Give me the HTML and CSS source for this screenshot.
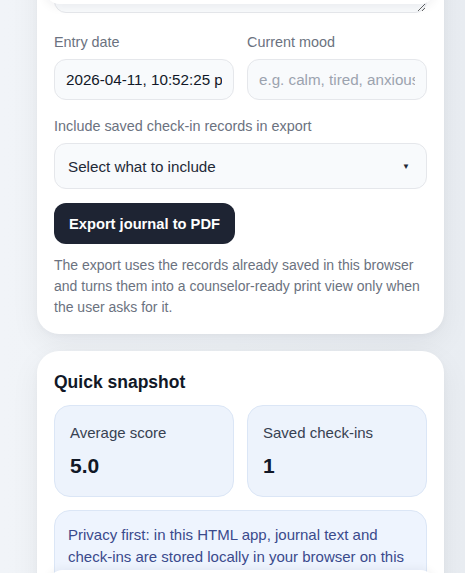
FILE: index.html
```html
<!DOCTYPE html>
<html lang="en">
<head>
<meta charset="utf-8">
<title>Journal</title>
<link rel="stylesheet" href="styles.css">
</head>
<body>
<div class="page">
  <section class="card card-form">
    <textarea class="notes" aria-label="Journal entry"></textarea>
    <div class="row">
      <label class="field">
        <span class="label">Entry date</span>
        <input class="input" type="text" value="2026-04-11, 10:52:25 pm">
      </label>
      <label class="field">
        <span class="label">Current mood</span>
        <input class="input" type="text" placeholder="e.g. calm, tired, anxious">
      </label>
    </div>
    <label class="field">
      <span class="label">Include saved check-in records in export</span>
      <div class="select">
        <span>Select what to include</span>
        <span class="caret">▼</span>
      </div>
    </label>
    <div><button class="btn" type="button">Export journal to PDF</button></div>
    <p class="note">The export uses the records already saved in this browser and turns them into a counselor-ready print view only when the user asks for it.</p>
  </section>

  <section class="card card-snap">
    <h2 class="title">Quick snapshot</h2>
    <div class="stats">
      <div class="stat">
        <div class="stat-label">Average score</div>
        <div class="stat-value">5.0</div>
      </div>
      <div class="stat">
        <div class="stat-label">Saved check-ins</div>
        <div class="stat-value">1</div>
      </div>
    </div>
    <div class="privacy">Privacy first: in this HTML app, journal text and check-ins are stored locally in your browser on this device and never leave it unless you export them.</div>
  </section>
</div>
<div class="overlay overlay-top"></div>
<div class="overlay overlay-bottom"></div>
</body>
</html>
```

FILE: styles.css
```css
* { box-sizing: border-box; }
html, body { margin: 0; height: 100%; overflow: hidden; }
body {
  background: linear-gradient(90deg, #f1f4f8 0%, #eef2f6 50%, #e9edf2 100%);
  font-family: "Liberation Sans", Arial, sans-serif;
  color: #1f2937;
}
.page {
  width: 407px;
  margin: -62px 0 0 37px;
  display: flex;
  flex-direction: column;
  gap: 17px;
}
.card {
  background: #fff;
  border-radius: 22px;
  padding: 0 17px 16px;
  box-shadow: 0 10px 30px rgba(15, 23, 42, 0.06), 0 2px 6px rgba(15, 23, 42, 0.03);
  display: flex;
  flex-direction: column;
}
.card-form { padding-top: 17px; }
.notes {
  display: block;
  width: 100%;
  height: 58px;
  resize: vertical;
  border: 1px solid #e5e7eb;
  border-radius: 12px;
  background: #f8fafc;
  margin: 0 0 19px;
  font: inherit;
}
.row {
  display: grid;
  grid-template-columns: 1fr 1fr;
  gap: 13px;
}
.field { display: flex; flex-direction: column; }
.label {
  font-size: 14.4px;
  line-height: 20px;
  color: #6b7280;
  margin-bottom: 7px;
}
.input {
  height: 41px;
  width: 100%;
  border: 1px solid #e5e7eb;
  border-radius: 12px;
  background: #f8fafc;
  padding: 0 11px;
  font: 15.2px "Liberation Sans", Arial, sans-serif;
  color: #111827;
  outline: none;
}
.input::placeholder { color: #9ca3af; }
.row + .field { margin-top: 16px; }
.select {
  height: 46px;
  border: 1px solid #e5e7eb;
  border-radius: 12px;
  background: #f8fafc;
  padding: 0 16px 0 13px;
  display: flex;
  align-items: center;
  justify-content: space-between;
  font-size: 15.2px;
  color: #1f2937;
}
.caret { font-size: 8px; color: #1f2937; }
.btn {
  margin-top: 14px;
  height: 41px;
  padding: 0 15px;
  border: 0;
  border-radius: 12px;
  background: #1e2433;
  color: #fff;
  font: bold 14.7px "Liberation Sans", Arial, sans-serif;
}
.note {
  margin: 11px 0 0;
  font-size: 14px;
  line-height: 21px;
  color: #6b7280;
}
.card-snap { padding-top: 20px; }
.title {
  margin: 0;
  font-size: 17.5px;
  line-height: 22px;
  font-weight: bold;
  color: #111827;
}
.stats {
  margin-top: 12px;
  display: grid;
  grid-template-columns: 1fr 1fr;
  gap: 13px;
}
.stat {
  height: 92px;
  background: #edf3fc;
  border: 1px solid #dbe6f6;
  border-radius: 16px;
  padding: 17px 15px 0;
}
.stat-label { font-size: 15px; line-height: 20px; color: #374151; }
.stat-value { margin-top: 11px; font-size: 21px; line-height: 24px; font-weight: bold; color: #111827; }
.privacy {
  margin-top: 13px;
  background: #eef4fe;
  border: 1px solid #dbe6f6;
  border-radius: 16px;
  padding: 13px 13px 14px;
  font-size: 15px;
  line-height: 22px;
  color: #3a4a8c;
}
.overlay {
  position: fixed;
  left: 44px;
  width: 392px;
  background: #fff;
}
.overlay-top {
  top: -20px;
  height: 24px;
  border-radius: 0 0 16px 16px;
  box-shadow: 0 4px 10px rgba(15, 23, 42, 0.05);
}
.overlay-bottom {
  top: 570px;
  left: 47px;
  width: 389px;
  height: 30px;
  border-radius: 16px 16px 0 0;
  box-shadow: 0 -2px 8px rgba(15, 23, 42, 0.05);
}
```
